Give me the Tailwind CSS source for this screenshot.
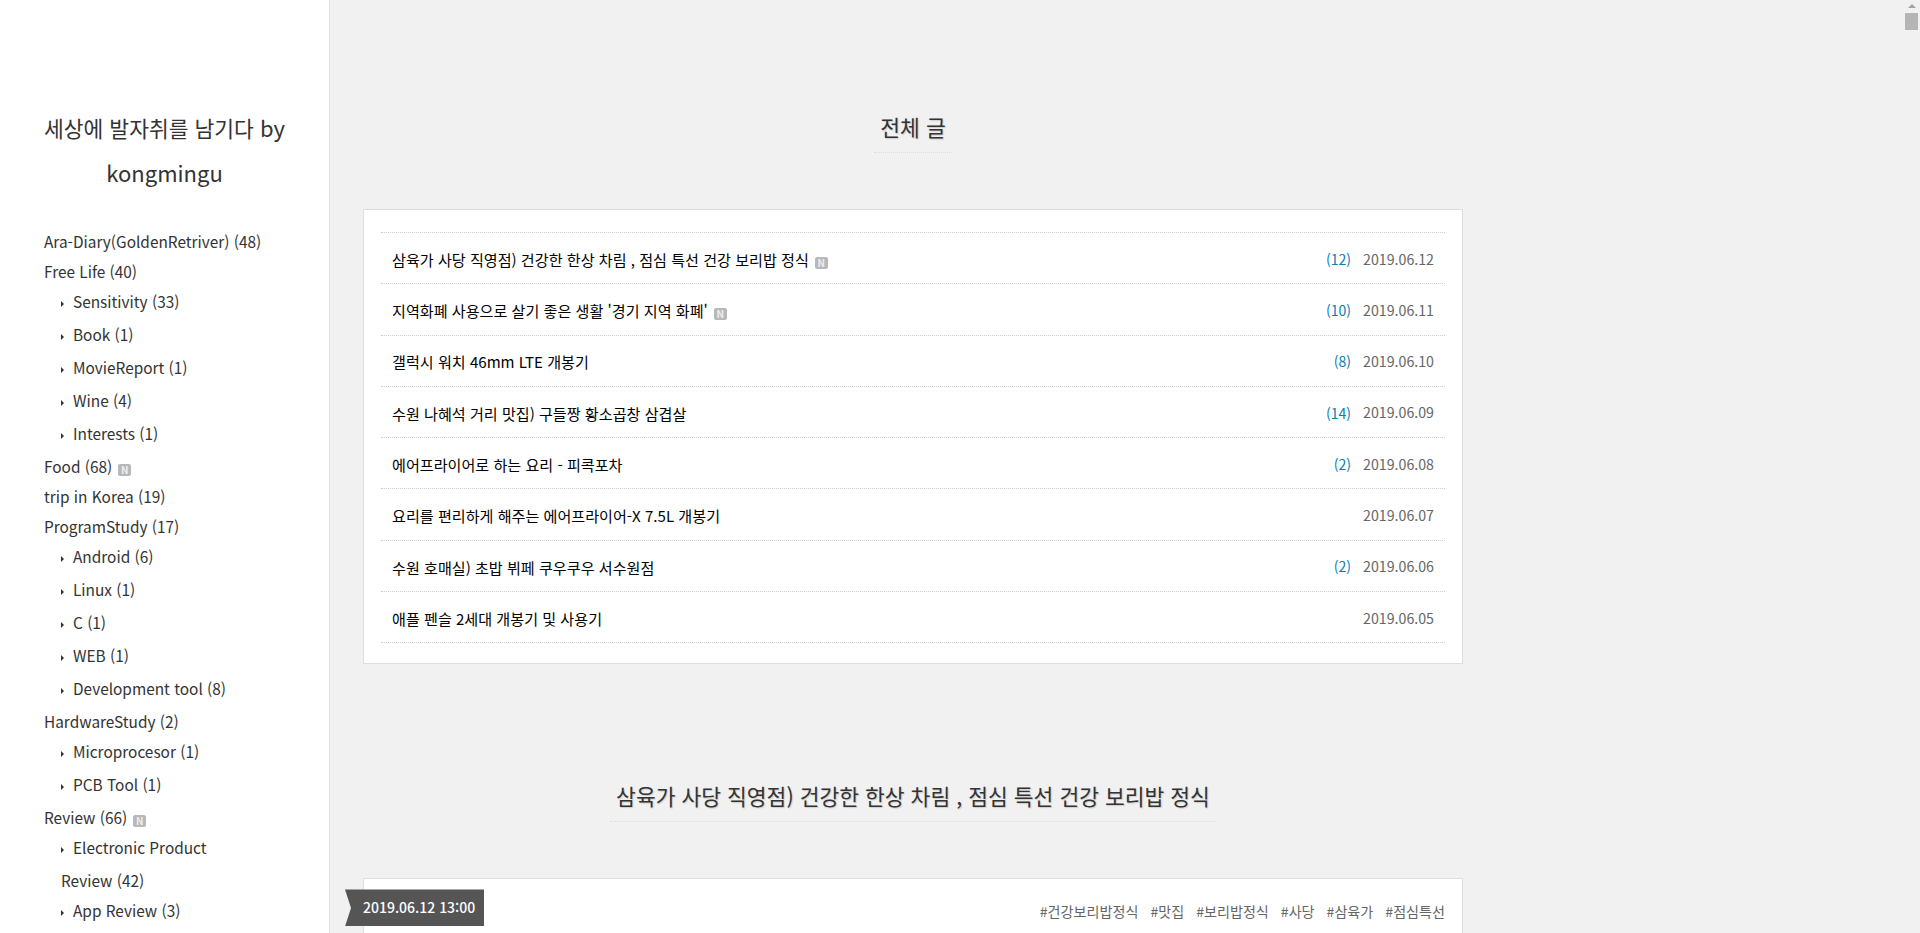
<!DOCTYPE html>
<html lang="ko">
<head>
    <meta charset="UTF-8">
    <meta name="viewport" content="width=device-width, initial-scale=1.0">
    <title>세상에 발자취를 남기다 by kongmingu</title>
    <script src="https://cdn.jsdelivr.net/npm/@tailwindcss/browser@4"></script>
</head>
<body class="h-screen overflow-hidden bg-[#f1f1f1] text-[#333] font-['Noto_Sans_CJK_KR','Noto_Sans',sans-serif]">
    <div class="flex h-[933px] overflow-hidden">
        <!-- sidebar -->
        <aside class="w-[330px] shrink-0 bg-white border-r border-[#e0e0e0] pt-[105px] px-11">
            <h1 class="-mx-4 text-[22px] leading-[44px] text-center font-normal"><span class="text-[21.5px]">세상에 발자취를 남기다</span> by<br>kongmingu</h1>
            <ul id="categories" class="mt-[32px] text-[15.4px]"></ul>
        </aside>

        <!-- main -->
        <main class="flex-1 pl-[33px]">
            <div class="w-[1100px]">
                <div class="pt-[105px] flex flex-col items-center">
                    <h2 class="text-[21.5px] leading-[44px] font-normal px-[6px] pb-[3px] border-b border-dotted border-[#dcdcdc] [text-shadow:1px_1px_1px_#ccc]">전체 글</h2>
                </div>

                <section class="mt-[56px] bg-white border border-[#dedede] pt-[22px] px-[17px] pb-[20px]">
                    <ul id="posts" class="border-t border-dotted border-[#cfcfcf]"></ul>
                </section>

                <div class="mt-[110px] flex flex-col items-center">
                    <h2 class="text-[21.5px] leading-[44px] font-normal px-[6px] pb-[3px] border-b border-dotted border-[#dcdcdc] [text-shadow:1px_1px_1px_#ccc]">삼육가 사당 직영점) 건강한 한상 차림 , 점심 특선 건강 보리밥 정식</h2>
                </div>

                <article class="relative mt-[56px] h-[200px] bg-white border border-[#dedede]">
                    <div class="absolute left-[-19px] top-[10px] h-[37px] w-[139px] pl-[18px] bg-[#555] text-white text-[14px] font-medium leading-[37px] [clip-path:polygon(0_0,100%_0,100%_100%,0_100%,6px_50%)]">2019.06.12 13:00</div>
                    <div class="flex justify-end gap-[12px] pt-[20px] pr-[17px] text-[14.1px] leading-[24px] text-[#666]">
                        <span>#건강보리밥정식</span><span>#맛집</span><span>#보리밥정식</span><span>#사당</span><span>#삼육가</span><span>#점심특선</span>
                    </div>
                </article>
            </div>
        </main>
    </div>

    <!-- scrollbar -->
    <div class="absolute right-0 top-0 h-[933px] w-[17px] bg-[#f1f1f1]">
        <svg class="absolute left-[5px] top-[4px]" width="8" height="4" viewBox="0 0 8 4"><path d="M4 0 8 4H0z" fill="#a3a3a3"/></svg>
        <div class="absolute left-[2px] top-[13px] h-[17px] w-[13px] bg-[#b5b5b5]"></div>
    </div>

    <script>
        const categories = [
            { name: "Ara-Diary(GoldenRetriver) (48)" },
            { name: "Free Life (40)", subs: ["Sensitivity (33)", "Book (1)", "MovieReport (1)", "Wine (4)", "Interests (1)"] },
            { name: "Food (68)", isNew: true },
            { name: "trip in Korea (19)" },
            { name: "ProgramStudy (17)", subs: ["Android (6)", "Linux (1)", "C (1)", "WEB (1)", "Development tool (8)"] },
            { name: "HardwareStudy (2)", subs: ["Microprocesor (1)", "PCB Tool (1)"] },
            { name: "Review (66)", isNew: true, subs: ["Electronic Product<br>Review (42)", "App Review (3)"] }
        ];

        const posts = [
            { title: "삼육가 사당 직영점) 건강한 한상 차림 , 점심 특선 건강 보리밥 정식", isNew: true, comments: 12, date: "2019.06.12" },
            { title: "지역화폐 사용으로 살기 좋은 생활 '경기 지역 화폐'", isNew: true, comments: 10, date: "2019.06.11" },
            { title: "갤럭시 워치 46mm LTE 개봉기", comments: 8, date: "2019.06.10" },
            { title: "수원 나혜석 거리 맛집) 구들짱 황소곱창 삼겹살", comments: 14, date: "2019.06.09" },
            { title: "에어프라이어로 하는 요리 - 피콕포차", comments: 2, date: "2019.06.08" },
            { title: "요리를 편리하게 해주는 에어프라이어-X 7.5L 개봉기", date: "2019.06.07" },
            { title: "수원 호매실) 초밥 뷔페 쿠우쿠우 서수원점", comments: 2, date: "2019.06.06" },
            { title: "애플 펜슬 2세대 개봉기 및 사용기", date: "2019.06.05" }
        ];

        const newBadge = `<span class="inline-block ml-[6px] w-[13px] h-[12px] rounded-[2px] bg-[#b8b8b8] text-[#eee] text-[10px] leading-[12px] text-center font-bold align-[-1px]">N</span>`;

        document.getElementById('categories').innerHTML = categories.map(cat => `
            <li>
                <div class="leading-[30px]">${cat.name}${cat.isNew ? newBadge : ''}</div>
                ${cat.subs ? `<ul class="-mt-[1px] pb-[1px] pl-[17px]">${cat.subs.map(sub => `
                    <li class="leading-[33px] ${sub.includes('<br>') ? '-mb-[3px]' : ''}"><svg class="inline-block mr-[9px] align-[1px]" width="3" height="6" viewBox="0 0 3 6"><path d="M0 0 3 3 0 6z" fill="#333"/></svg>${sub}</li>
                `).join('')}</ul>` : ''}
            </li>
        `).join('');

        document.getElementById('posts').innerHTML = posts.map(post => `
            <li class="flex items-center h-[51.3px] pt-[2px] px-[11px] border-b border-dotted border-[#cfcfcf]">
                <span class="flex-1 text-black text-[15.1px]">${post.title}${post.isNew ? newBadge : ''}</span>
                ${post.comments ? `<span class="text-[#0b7db5] text-[14px] mr-[12px]">(${post.comments})</span>` : ''}
                <span class="text-[#666] text-[14.2px]">${post.date}</span>
            </li>
        `).join('');
    </script>
</body>
</html>
